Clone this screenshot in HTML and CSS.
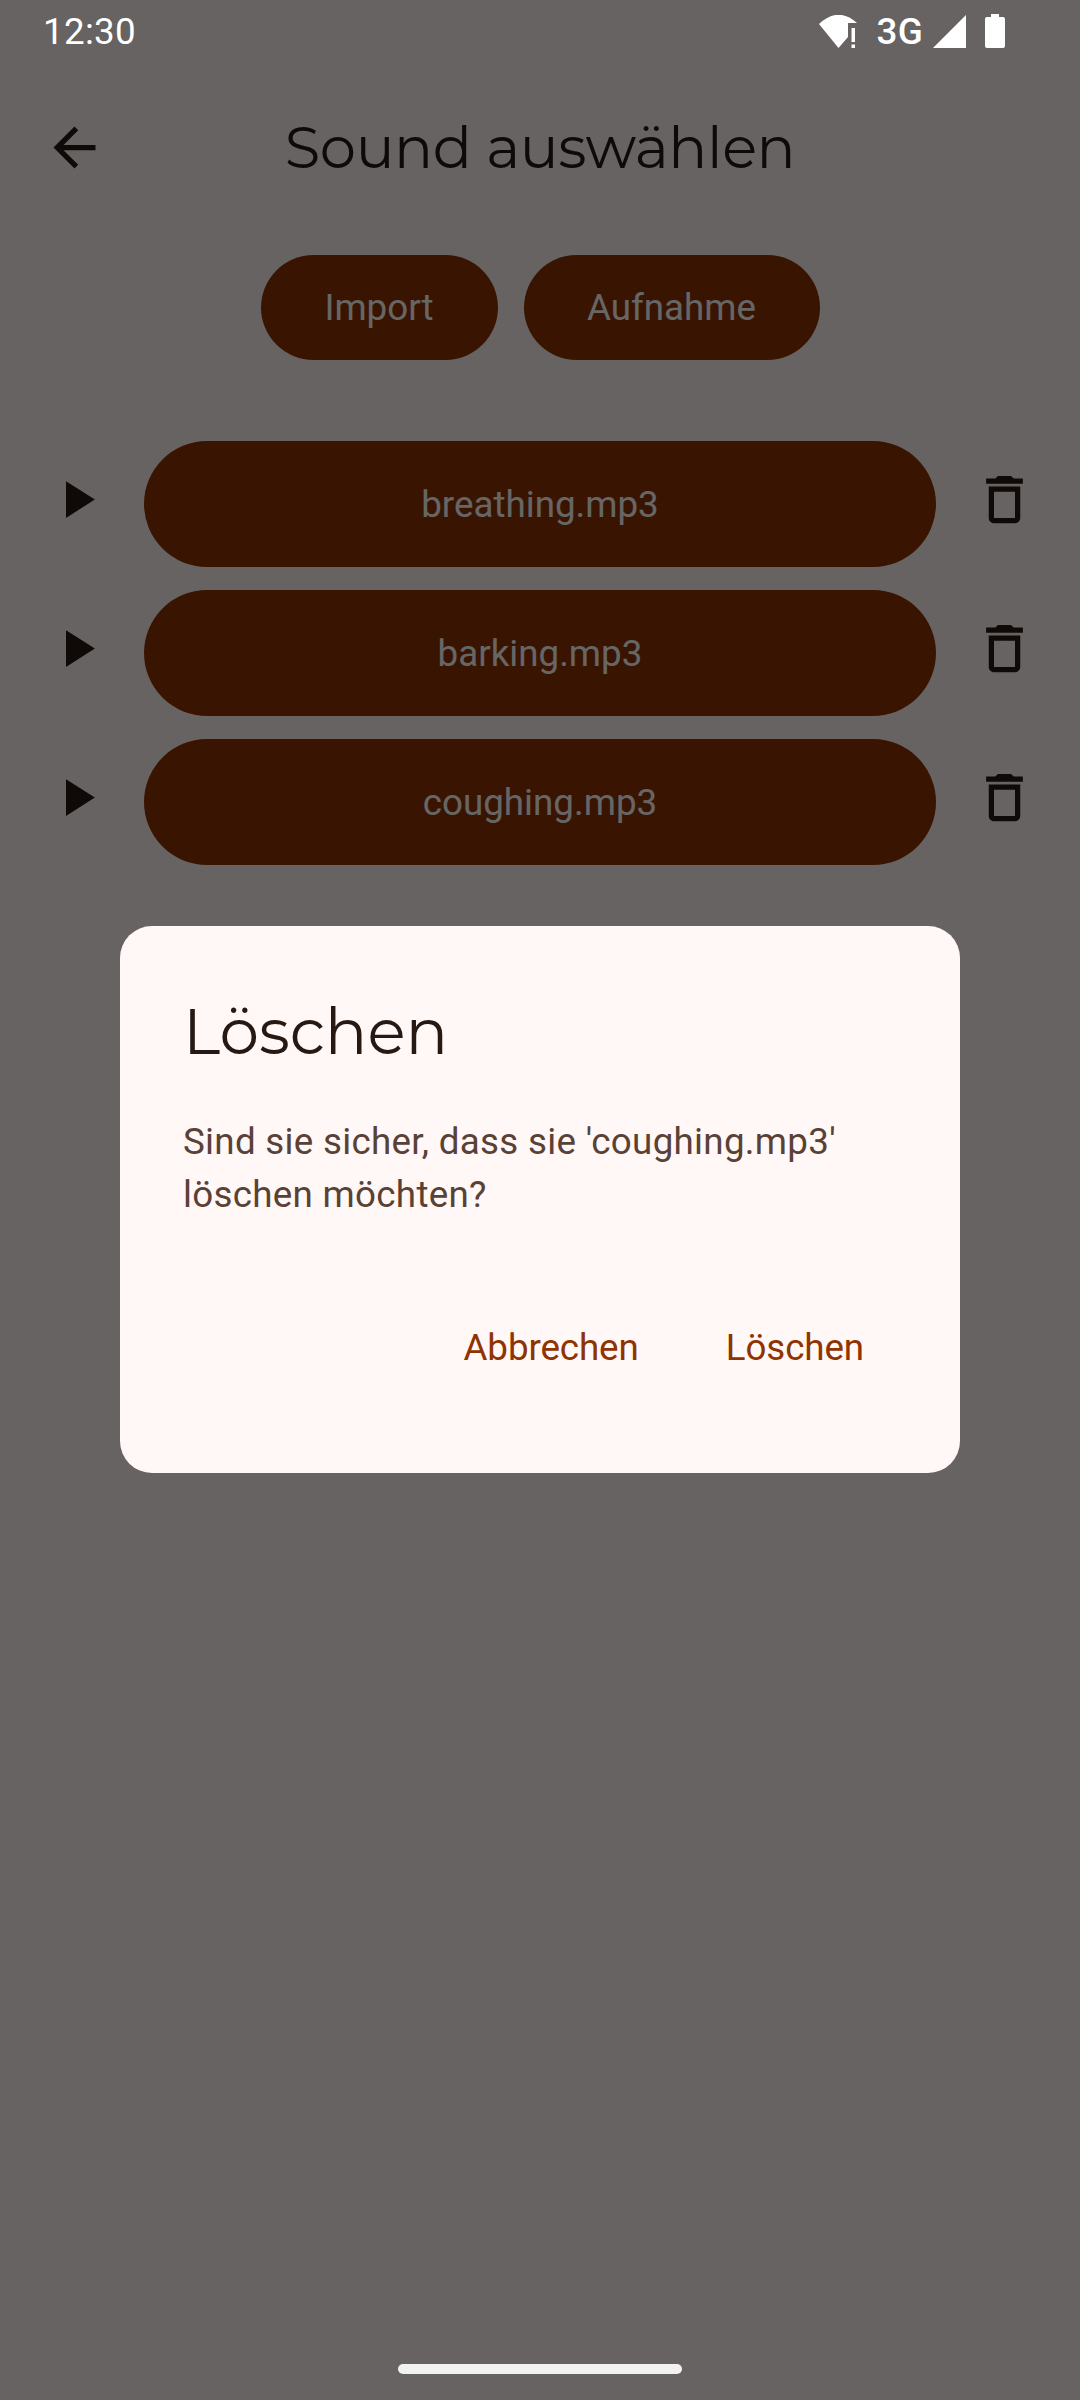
FILE: index.html
```html
<!DOCTYPE html>
<html lang="de">
<head>
<meta charset="utf-8">
<title>Sound auswählen</title>
<link rel="stylesheet" href="styles.css">
</head>
<body>
<svg class="defs" aria-hidden="true">
  <symbol id="back" viewBox="0 0 24 24"><path d="M20 11H7.83l5.59-5.59L12 4l-8 8 8 8 1.41-1.41L7.83 13H20v-2z"/></symbol>
  <symbol id="play" viewBox="0 0 24 24"><path d="M8 5v14l11-7z"/></symbol>
  <symbol id="trash" viewBox="0 0 24 24"><path fill-rule="evenodd" d="M6 19c0 1.1.9 2 2 2h8c1.1 0 2-.9 2-2V7H6v12zM8 9h8v10H8V9zm7.5-5-1-1h-5l-1 1H5v2h14V4z"/></symbol>
</svg>
<div class="screen">
  <main class="page">
    <header class="appbar">
      <svg class="icon"><use href="#back"/></svg>
      <h1 class="appbar-title">Sound auswählen</h1>
    </header>
    <div class="actions">
      <button class="pill import">Import</button>
      <button class="pill record">Aufnahme</button>
    </div>
    <ul class="sounds">
      <li class="sound"><svg class="icon"><use href="#play"/></svg><button class="pill file">breathing.mp3</button><svg class="icon"><use href="#trash"/></svg></li>
      <li class="sound"><svg class="icon"><use href="#play"/></svg><button class="pill file">barking.mp3</button><svg class="icon"><use href="#trash"/></svg></li>
      <li class="sound"><svg class="icon"><use href="#play"/></svg><button class="pill file">coughing.mp3</button><svg class="icon"><use href="#trash"/></svg></li>
    </ul>
  </main>
  <div class="scrim">
    <section class="dialog" role="dialog">
      <h2 class="dialog-title">Löschen</h2>
      <p class="dialog-text">Sind sie sicher, dass sie 'coughing.mp3'<br>löschen möchten?</p>
      <div class="dialog-actions">
        <button class="text-button">Abbrechen</button>
        <button class="text-button">Löschen</button>
      </div>
    </section>
  </div>
  <div class="system">
    <div class="status">
      <span class="clock">12:30</span>
      <svg class="wifi" viewBox="0 0 38 33"><path d="M0 9Q19-9 38 8H29V22L19.500 33Z"/><path d="M32.500 13h3.500v14h-3.500zM32.500 29.500h3.500V33h-3.500z"/></svg>
      <span class="network">3G</span>
      <svg class="signal" viewBox="0 0 33 33"><path d="M33 0V33H0z"/></svg>
      <svg class="battery" viewBox="0 0 20 34"><path d="M6 0h8v3h4q2 0 2 2v27q0 2-2 2H2q-2 0-2-2V5q0-2 2-2h4z"/></svg>
    </div>
    <div class="home-bar"></div>
  </div>
</div>
</body>
</html>
```
FILE: styles.css
```css
* { box-sizing: border-box; }
body { margin: 0; font-family: Roboto, sans-serif; font-size: 36.75px; }
h1, h2, p, ul { margin: 0; padding: 0; }
button { border: 0; background: none; padding: 0; font: inherit; }
.defs { display: none; }
.screen { position: relative; width: 1080px; height: 2400px; overflow: hidden; background: #fff8f6; }

.page { display: flex; flex-direction: column; padding-top: 63px; }
.appbar { display: flex; align-items: center; height: 168px; padding: 0 43px; color: #261812; }
.appbar-title { flex: 1; margin-right: 63px; padding-top: 2px; text-align: center; font: 400 57.750px/1 Montserrat, Inter, sans-serif; letter-spacing: -.4px; }
.icon { flex: none; width: 63px; height: 63px; fill: #261812; }

.actions { display: flex; justify-content: center; gap: 26px; margin-top: 24px; }
.pill { height: 105px; border-radius: 63px; background: #8f3300; color: #fff; }
.import { width: 237px; }
.record { width: 296px; }
.sounds { display: flex; flex-direction: column; gap: 23px; margin-top: 81px; list-style: none; }
.sound { display: flex; padding-left: 45px; }
.sound .icon { margin-top: 27px; }
.file { width: 792px; height: 126px; margin: 0 37px 0 36px; }

.scrim { position: absolute; inset: 0; display: flex; align-items: flex-start; justify-content: center; padding-top: 926px; background: rgba(0, 0, 0, .6); }
.dialog { width: 840px; height: 547px; padding: 64px 63px 62px; border-radius: 32px; background: #fff8f6; }
.dialog-title { color: #261812; font: 400 63px/84px Montserrat, Inter, sans-serif; }
.dialog-text { margin-top: 41px; color: #5a4136; line-height: 53px; letter-spacing: .29px; }
.dialog-actions { display: flex; justify-content: flex-end; gap: 87px; margin-top: 74px; padding-right: 33px; }
.text-button { height: 105px; color: #8f3300; letter-spacing: -.1px; }

.system { position: absolute; inset: 0; display: flex; flex-direction: column; justify-content: space-between; align-items: center; padding-bottom: 26px; }
.status { display: flex; align-items: center; width: 100%; height: 62px; padding: 0 75px 0 43px; color: #fff; }
.status svg { fill: #fff; }
.clock { margin-right: auto; letter-spacing: .3px; }
.wifi { width: 38px; height: 33px; }
.network { margin: 0 10px 0 19px; font-weight: 500; letter-spacing: .3px; }
.signal { width: 33px; height: 33px; }
.battery { width: 20px; height: 34px; margin-left: 19px; }
.home-bar { width: 284px; height: 10px; border-radius: 5px; background: #f2f2f2; }
```
